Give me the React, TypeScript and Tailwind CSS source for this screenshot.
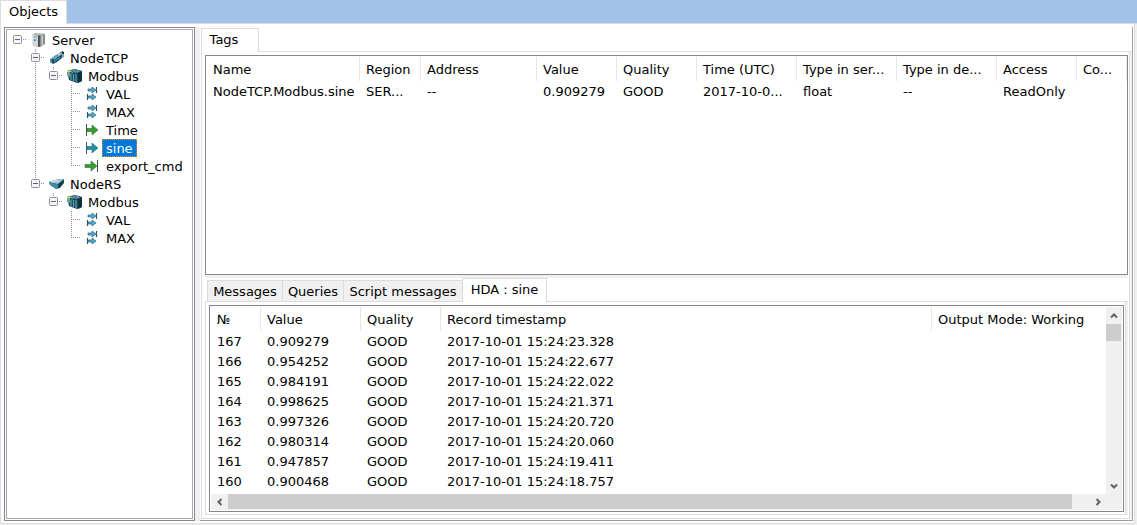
import React, { useState } from "react";

type IconKind = "server" | "tcp" | "rs" | "modbus" | "inout" | "inGreen" | "inTeal" | "out";
type Guide = "none" | "line" | "tee" | "end" | "root" | "box" | "boxEnd";

interface TreeRow {
  id: string;
  label: string;
  icon: IconKind;
  guides: Guide[];
}

const TREE: TreeRow[] = [
  { id: "server", label: "Server", icon: "server", guides: ["root"] },
  { id: "tcp", label: "NodeTCP", icon: "tcp", guides: ["none", "box"] },
  { id: "tcp-mb", label: "Modbus", icon: "modbus", guides: ["none", "line", "boxEnd"] },
  { id: "tcp-val", label: "VAL", icon: "inout", guides: ["none", "line", "none", "tee"] },
  { id: "tcp-max", label: "MAX", icon: "inout", guides: ["none", "line", "none", "tee"] },
  { id: "tcp-time", label: "Time", icon: "inGreen", guides: ["none", "line", "none", "tee"] },
  { id: "tcp-sine", label: "sine", icon: "inTeal", guides: ["none", "line", "none", "tee"] },
  { id: "tcp-exp", label: "export_cmd", icon: "out", guides: ["none", "line", "none", "end"] },
  { id: "rs", label: "NodeRS", icon: "rs", guides: ["none", "boxEnd"] },
  { id: "rs-mb", label: "Modbus", icon: "modbus", guides: ["none", "none", "boxEnd"] },
  { id: "rs-val", label: "VAL", icon: "inout", guides: ["none", "none", "none", "tee"] },
  { id: "rs-max", label: "MAX", icon: "inout", guides: ["none", "none", "none", "end"] },
];

const TAG_COLUMNS = [
  { title: "Name", value: "NodeTCP.Modbus.sine", col: "" },
  { title: "Region", value: "SER...", col: "w-[61px]" },
  { title: "Address", value: "--", col: "w-[116px]" },
  { title: "Value", value: "0.909279", col: "w-[80px]" },
  { title: "Quality", value: "GOOD", col: "w-[80px]" },
  { title: "Time (UTC)", value: "2017-10-0...", col: "w-[100px]" },
  { title: "Type in ser...", value: "float", col: "w-[100px]" },
  { title: "Type in de...", value: "--", col: "w-[100px]" },
  { title: "Access", value: "ReadOnly", col: "w-[80px]" },
  { title: "Co...", value: "", col: "w-[50px]" },
];

const HISTORY = [
  ["167", "0.909279", "GOOD", "2017-10-01 15:24:23.328"],
  ["166", "0.954252", "GOOD", "2017-10-01 15:24:22.677"],
  ["165", "0.984191", "GOOD", "2017-10-01 15:24:22.022"],
  ["164", "0.998625", "GOOD", "2017-10-01 15:24:21.371"],
  ["163", "0.997326", "GOOD", "2017-10-01 15:24:20.720"],
  ["162", "0.980314", "GOOD", "2017-10-01 15:24:20.060"],
  ["161", "0.947857", "GOOD", "2017-10-01 15:24:19.411"],
  ["160", "0.900468", "GOOD", "2017-10-01 15:24:18.757"],
];

function GuideCell({ kind }: { kind: Guide }) {
  const boxed = kind === "root" || kind === "box" || kind === "boxEnd";
  const dots = { stroke: "#909090", strokeWidth: 1, strokeDasharray: "1 1" };
  return (
    <svg width="18" height="18" viewBox="0 0 18 18" className="shrink-0" aria-hidden="true">
      {(kind === "line" || kind === "tee" || kind === "box") && <path d="M9.5 0V18" {...dots} />}
      {(kind === "end" || kind === "boxEnd") && <path d="M9.5 0V9" {...dots} />}
      {(kind === "tee" || kind === "end") && <path d="M9 8.5H18" {...dots} />}
      {boxed && (
        <>
          <path d="M15 8.5H18" {...dots} />
          <rect x="5.5" y="4.5" width="8" height="8" rx="1" fill="#f6f6f6" stroke="#919191" />
          <path d="M7 8.5H12" stroke="#4b63a7" />
        </>
      )}
    </svg>
  );
}

function TreeIcon({ kind }: { kind: IconKind }) {
  return (
    <svg width="18" height="18" viewBox="0 0 18 18" className="shrink-0" aria-hidden="true">
      {kind === "server" && (
        <>
          <path d="M3 3.5L6 2L15 3V13L10 16L3 14Z" fill="#85898a" />
          <path d="M3 3.5L8 4.5V16L3 14Z" fill="#d9dddd" stroke="#a9aeae" strokeWidth=".6" />
          <path d="M4 5L7 5.6V7L4 6.400Z" fill="#9ea4a6" />
          <path d="M4 9L6 9.400" stroke="#2f8fc4" strokeWidth="1.6" />
          <path d="M8 4.5L10 4V15.6L8 16Z" fill="#4f5557" />
          <path d="M12.2 4V14" stroke="#c9cccc" strokeWidth="1.8" />
          <path d="M4 3.2L8 2L14.5 3L9.5 4.300Z" fill="#c4c8c8" />
        </>
      )}
      {kind === "tcp" && (
        <>
          <path d="M3 10L8 6L12 4L14 5V9L9 13L5 15L2 13Z" fill="#1d4f66" />
          <path d="M3 9.5L8 6L12 6.5L7 10.5Z" fill="#62a3bc" />
          <path d="M2 9.5L4 11V14L2 13Z" fill="#4c91aa" />
          <path d="M9 5.5L12.5 4L14 5L11 7Z" fill="#c3dbe2" />
          <path d="M6 12.5L12 8.500" stroke="#4aa0c1" />
          <path d="M12 4L15 2.500V8.500" fill="none" stroke="#234654" />
          <rect x="14" y="3" width="2" height="2" fill="#16323e" />
        </>
      )}
      {kind === "rs" && (
        <>
          <path d="M1 7L9 4.500L16 4V8L12 13L8 14L2 10Z" fill="#205b73" />
          <path d="M1 7L9 4.500L16 4L10 9Z" fill="#a9cad4" />
          <path d="M1.5 7.5L10 9.5V13L8 13.500L2 10Z" fill="#3f8aa6" />
          <path d="M10 9L15.5 5V8L12 12L10 13Z" fill="#163e50" />
          <path d="M3 7.200L10 5" stroke="#d3e4e9" />
        </>
      )}
      {kind === "modbus" && (
        <>
          <path d="M1 4L9 2L16 4V14L11 16L3 13Z" fill="#174759" />
          <path d="M1 4L9 2L16 4L11 6Z" fill="#3f7a8c" />
          <path d="M12 6L16 4.500V14L12 16Z" fill="#0d303f" />
          <path d="M5 6.500V13M7.500 7V14M10 7V15" stroke="#5f9fb4" strokeWidth="1.200" />
          <path d="M4 4L7 6M7 3L10 5.500M10 2.500L13 5" stroke="#9bc0ca" strokeWidth=".8" />
          <path d="M1 5L4 6V10L1 9Z" fill="#5fa5a8" />
          <path d="M3 2.500V6.500M1 4.500H5" stroke="#cfdc5a" strokeWidth="1" />
        </>
      )}
      {kind === "inout" && (
        <>
          <path d="M4 4H8V2L12 5L8 8V6H4Z" fill="#4fa9cc" stroke="#2b6a85" strokeWidth=".7" />
          <path d="M12.5 2V8" stroke="#31566a" strokeWidth="1.2" />
          <path d="M4 11H8V9L12 12L8 15V13H4Z" fill="#4fa9cc" stroke="#2b6a85" strokeWidth=".7" />
          <path d="M3.5 9V15" stroke="#31566a" strokeWidth="1.2" />
        </>
      )}
      {(kind === "inGreen" || kind === "inTeal") && (
        <>
          <path
            d="M3 7.500H8V4L14 9L8 14V10.500H3Z"
            fill={kind === "inGreen" ? "#3a9a35" : "#248fa2"}
            stroke={kind === "inGreen" ? "#28742c" : "#1f7180"}
            strokeWidth=".6"
          />
          <path d="M2.5 3V15" stroke={kind === "inGreen" ? "#325d39" : "#325b66"} />
        </>
      )}
      {kind === "out" && (
        <>
          <path d="M1 7.500H7V4L13 9L7 14V10.500H1Z" fill="#3a9a35" stroke="#28742c" strokeWidth=".6" />
          <path d="M13.5 3V15" stroke="#3c5541" />
        </>
      )}
    </svg>
  );
}

function Chevron({ turn }: { turn: string }) {
  return (
    <svg width="8" height="8" viewBox="0 0 8 8" className={turn} aria-hidden="true">
      <path d="M1 5.5L4 2.5L7 5.5" fill="none" stroke="#606060" strokeWidth="2" />
    </svg>
  );
}

function ObjectTree() {
  const [selected, setSelected] = useState("tcp-sine");
  return (
    <nav aria-label="Objects" className="w-[191px] shrink-0 border border-[#828790] p-px">
      <ul className="h-full border border-[#a5a9b0] pt-px pl-px">
        {TREE.map((row) => (
          <li key={row.id} className="flex h-[18px] items-center">
            {row.guides.map((g, i) => (
              <GuideCell key={i} kind={g} />
            ))}
            <span className="flex w-[22px] shrink-0 justify-end">
              <TreeIcon kind={row.icon} />
            </span>
            <button
              type="button"
              onClick={() => setSelected(row.id)}
              className={
                row.id === selected
                  ? "h-[18px] border border-dotted border-[#ff8728] bg-[#0078d7] px-[3px] leading-[18px] text-white"
                  : "h-[18px] border border-transparent px-[3px] leading-[18px]"
              }
            >
              {row.label}
            </button>
          </li>
        ))}
      </ul>
    </nav>
  );
}

function TagsTable() {
  return (
    <div className="h-[220px] shrink-0 overflow-hidden border border-[#828790] pt-px pl-px">
      <table className="w-full table-fixed border-separate border-spacing-0 text-left whitespace-nowrap">
        <colgroup>
          {TAG_COLUMNS.map((c) => (
            <col key={c.title} className={c.col} />
          ))}
        </colgroup>
        <thead>
          <tr className="h-6">
            {TAG_COLUMNS.map((c) => (
              <th key={c.title} className="border-r border-[#e5e5e5] p-0 pt-[2px] pl-[6px] font-normal">
                {c.title}
              </th>
            ))}
          </tr>
        </thead>
        <tbody>
          <tr className="h-5">
            {TAG_COLUMNS.map((c) => (
              <td key={c.title} className="p-0 pt-[2px] pl-[6px]">
                {c.value}
              </td>
            ))}
          </tr>
        </tbody>
      </table>
    </div>
  );
}

function HistoryTable() {
  return (
    <div className="flex min-h-0 flex-1 flex-col border border-[#828790] p-px">
      <div className="flex min-h-0 flex-1">
        <div className="min-w-0 flex-1 overflow-hidden">
          <table className="w-full table-fixed border-separate border-spacing-0 text-left whitespace-nowrap">
            <colgroup>
              <col className="w-[50px]" />
              <col className="w-[100px]" />
              <col className="w-[80px]" />
              <col />
              <col className="w-[174px]" />
            </colgroup>
            <thead>
              <tr className="h-6">
                {["№", "Value", "Quality", "Record timestamp"].map((t) => (
                  <th key={t} className="border-r border-[#e5e5e5] p-0 pt-[2px] pl-[6px] font-normal">
                    {t}
                  </th>
                ))}
                <th className="p-0 pt-[2px] pl-[6px] font-normal">Output Mode: Working</th>
              </tr>
            </thead>
            <tbody>
              {HISTORY.map((r) => (
                <tr key={r[0]} className="h-5">
                  {r.map((v, i) => (
                    <td key={i} className="p-0 pt-[2px] pl-[6px]">
                      {v}
                    </td>
                  ))}
                  <td />
                </tr>
              ))}
            </tbody>
          </table>
        </div>
        <div className="flex w-4 shrink-0 flex-col bg-[#f0f0f0]">
          <button type="button" aria-label="Scroll up" className="flex h-[17px] items-center justify-center">
            <Chevron turn="" />
          </button>
          <div className="h-[17px] w-[15px] bg-[#cdcdcd]" />
          <div className="flex-1" />
          <button type="button" aria-label="Scroll down" className="flex h-[17px] items-center justify-center">
            <Chevron turn="rotate-180" />
          </button>
        </div>
      </div>
      <div className="flex h-4 shrink-0 bg-[#f0f0f0] pr-4">
        <button type="button" aria-label="Scroll left" className="flex w-[17px] items-center justify-center">
          <Chevron turn="-rotate-90" />
        </button>
        <div className="mr-[17px] h-[15px] flex-1 bg-[#cdcdcd]" />
        <button type="button" aria-label="Scroll right" className="flex w-[17px] items-center justify-center">
          <Chevron turn="rotate-90" />
        </button>
      </div>
    </div>
  );
}

export default function App() {
  return (
    <div className="flex h-screen flex-col bg-[#f0f0f0] font-['DejaVu_Sans',Verdana,sans-serif] text-[13px] leading-4 text-black">
      <header className="flex h-6 shrink-0 bg-[#a3c2ea]">
        <button type="button" className="w-[67px] border-t border-r border-l border-[#dcdcdc] bg-white pb-[2px] text-center">
          Objects
        </button>
        <div className="flex-1 border-b border-[#dcdcdc]" />
      </header>
      <main className="mr-[2px] mb-px flex min-h-0 flex-1 border-r border-b border-l border-[#dcdcdc] bg-white pt-[3px] pr-px pb-[2px] pl-[3px]">
        <ObjectTree />
        <div className="w-[5px] shrink-0 bg-[#f0f0f0]" />
        <section className="flex min-w-0 flex-1 flex-col border-r border-b border-[#a0a0a0] py-px pl-px">
          <div className="flex h-6 shrink-0">
            <button type="button" className="w-[58px] border-t border-r border-l border-[#dcdcdc] pr-3 pb-[2px] text-center">
              Tags
            </button>
            <div className="flex-1 border-b border-[#dcdcdc]" />
          </div>
          <div className="flex min-h-0 flex-1 bg-[#f0f0f0] pr-[2px]">
            <div className="flex min-w-0 flex-1 flex-col border-r border-b border-l border-[#dcdcdc] bg-white pt-[3px] pr-px pb-[3px] pl-[3px]">
              <TagsTable />
              <div className="h-[3px] shrink-0 bg-[#f0f0f0]" />
              <div className="flex h-6 shrink-0 items-end">
                <div className="w-[2px] self-stretch border-b border-[#dcdcdc]" />
                <button type="button" className="h-[22px] w-[75px] border border-r-0 border-[#dcdcdc] bg-[#f0f0f0] pt-[2px] text-center">
                  Messages
                </button>
                <button type="button" className="h-[22px] w-[61px] border border-r-0 border-[#dcdcdc] bg-[#f0f0f0] pt-[2px] text-center">
                  Queries
                </button>
                <button type="button" className="h-[22px] w-[119px] border border-r-0 border-[#dcdcdc] bg-[#f0f0f0] pt-[2px] text-center whitespace-nowrap">
                  Script messages
                </button>
                <button type="button" className="h-6 w-[85px] border-t border-r border-l border-[#dcdcdc] bg-white pb-[2px] text-center">
                  HDA : sine
                </button>
                <div className="flex-1 self-stretch border-b border-[#dcdcdc]" />
              </div>
              <div className="flex min-h-0 flex-1 bg-[#f0f0f0] pr-[2px]">
                <div className="flex min-w-0 flex-1 flex-col border-r border-b border-l border-[#dcdcdc] bg-white pt-[3px] pr-px pb-[2px] pl-[3px]">
                  <HistoryTable />
                </div>
              </div>
            </div>
          </div>
        </section>
      </main>
    </div>
  );
}
